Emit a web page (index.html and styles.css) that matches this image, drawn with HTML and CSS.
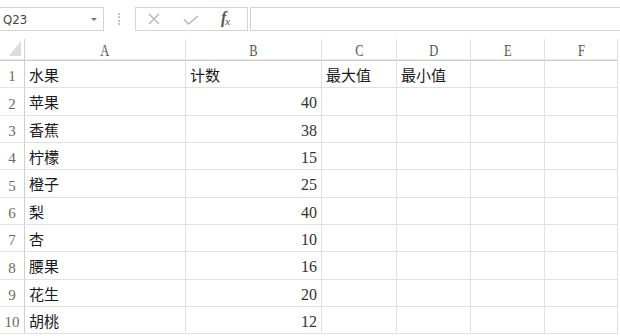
FILE: index.html
```html
<!DOCTYPE html>
<html lang="zh">
<head>
<meta charset="utf-8">
<link rel="stylesheet" href="styles.css">
</head>
<body>
<div class="fbar">
  <div class="namebox"><span class="ref">Q23</span><span class="caret"></span></div>
  <div class="grip"></div>
  <div class="fnbox">
    <svg class="ico-x" width="12" height="12" viewBox="0 0 12 12"><path d="M1 1L11 11M11 1L1 11" stroke="#b4b4b4" stroke-width="1.3" fill="none"/></svg>
    <svg class="ico-ok" width="16" height="10" viewBox="0 0 16 10"><path d="M1 4.5L5.5 9L15 1" stroke="#b4b4b4" stroke-width="1.4" fill="none"/></svg>
    <span class="fx"><i>f</i><sub>x</sub></span>
  </div>
  <div class="input"></div>
</div>
<div class="sheet">
  <div class="hd corner"><span class="tri"></span></div>
  <div class="hd"><span class="lt">A</span></div><div class="hd"><span class="lt">B</span></div><div class="hd"><span class="lt">C</span></div><div class="hd"><span class="lt">D</span></div><div class="hd"><span class="lt">E</span></div><div class="hd"><span class="lt">F</span></div>

  <div class="rn">1</div><div class="c">水果</div><div class="c">计数</div><div class="c">最大值</div><div class="c">最小值</div><div class="c"></div><div class="c"></div>
  <div class="rn">2</div><div class="c">苹果</div><div class="c n">40</div><div class="c"></div><div class="c"></div><div class="c"></div><div class="c"></div>
  <div class="rn">3</div><div class="c">香蕉</div><div class="c n">38</div><div class="c"></div><div class="c"></div><div class="c"></div><div class="c"></div>
  <div class="rn">4</div><div class="c">柠檬</div><div class="c n">15</div><div class="c"></div><div class="c"></div><div class="c"></div><div class="c"></div>
  <div class="rn">5</div><div class="c">橙子</div><div class="c n">25</div><div class="c"></div><div class="c"></div><div class="c"></div><div class="c"></div>
  <div class="rn">6</div><div class="c">梨</div><div class="c n">40</div><div class="c"></div><div class="c"></div><div class="c"></div><div class="c"></div>
  <div class="rn">7</div><div class="c">杏</div><div class="c n">10</div><div class="c"></div><div class="c"></div><div class="c"></div><div class="c"></div>
  <div class="rn">8</div><div class="c">腰果</div><div class="c n">16</div><div class="c"></div><div class="c"></div><div class="c"></div><div class="c"></div>
  <div class="rn">9</div><div class="c">花生</div><div class="c n">20</div><div class="c"></div><div class="c"></div><div class="c"></div><div class="c"></div>
  <div class="rn">10</div><div class="c">胡桃</div><div class="c n">12</div><div class="c"></div><div class="c"></div><div class="c"></div><div class="c"></div>
</div>
</body>
</html>
```
FILE: styles.css
```css
html, body {
  margin: 0;
  padding: 0;
  background: #fff;
  width: 620px;
  height: 336px;
  overflow: hidden;
}
body {
  font-family: "Noto Sans CJK SC", "Liberation Serif", serif;
  color: #1a1a1a;
}
.fbar {
  display: flex;
  align-items: center;
  height: 39px;
  padding-bottom: 1px;
  box-sizing: border-box;
}
.namebox {
  width: 104px;
  height: 24px;
  box-sizing: border-box;
  border: 1px solid #d4d4d4;
  border-left: none;
  display: flex;
  align-items: center;
  justify-content: space-between;
  padding: 0 6px 0 3px;
}
.ref {
  font-family: "DejaVu Sans Condensed", "Liberation Sans Narrow", "Liberation Sans", sans-serif;
  font-stretch: condensed;
  font-size: 13px;
  color: #444;
}
.caret {
  width: 0;
  height: 0;
  border-left: 3px solid transparent;
  border-right: 3px solid transparent;
  border-top: 3px solid #777;
}
.grip {
  width: 0;
  height: 12px;
  border-left: 2px dotted #c4c4c4;
  margin: 0 15px 0 14px;
}
.fnbox {
  width: 113px;
  height: 24px;
  box-sizing: border-box;
  border: 1px solid #d4d4d4;
  display: flex;
  align-items: center;
  padding-left: 12px;
}
.ico-x { margin-right: 23px; }
.ico-ok { margin-right: 22px; margin-top: 2px; }
.fx {
  font-family: "Liberation Serif", serif;
  font-size: 16px;
  color: #555;
  line-height: 1;
  margin-top: -2px;
}
.fx i { font-weight: bold; }
.fx sub { font-size: 11px; font-style: italic; vertical-align: -2px; margin-left: -1px; }
.input {
  flex: 1;
  height: 24px;
  margin-left: 2px;
  margin-right: -2px;
  box-sizing: border-box;
  border: 1px solid #d4d4d4;
}
.sheet {
  display: grid;
  grid-template-columns: 25px 161px 136px 75px 74px 74px 73px;
  grid-template-rows: 22px 27px 28px 27px 27px 28px 27px 27px 28px 27px 27px;
}
.hd {
  border-right: 1px solid #e2e2e2;
  border-bottom: 1px solid #cdcdcd;
  display: flex;
  align-items: center;
  justify-content: center;
  font-family: "Liberation Serif", serif;
  font-size: 16px;
  color: #555;
  padding-top: 3px;
  box-sizing: border-box;
  box-shadow: inset 0 -1px 0 #ececec;
}
.lt {
  display: inline-block;
  transform: scaleX(0.78);
}
.corner {
  position: relative;
  border-right: 1px solid #d0d0d0;
}
.tri {
  position: absolute;
  right: 3px;
  bottom: 4px;
  width: 0;
  height: 0;
  border-left: 12px solid transparent;
  border-bottom: 15px solid #dcdcdc;
}
.rn {
  border-right: 1px solid #d0d0d0;
  border-bottom: 1px solid #e6e6e6;
  display: flex;
  align-items: center;
  justify-content: center;
  font-family: "Liberation Serif", serif;
  font-size: 15px;
  color: #6a6a6a;
  padding-top: 5px;
  box-sizing: border-box;
}
.c {
  border-right: 1px solid #e2e2e2;
  border-bottom: 1px solid #e2e2e2;
  display: flex;
  align-items: center;
  padding: 0 4px;
  font-size: 15px;
  line-height: 1;
  white-space: nowrap;
}
.n {
  justify-content: flex-end;
  font-family: "Liberation Serif", serif;
  font-size: 16px;
  color: #333;
  padding-top: 3px;
}
```
